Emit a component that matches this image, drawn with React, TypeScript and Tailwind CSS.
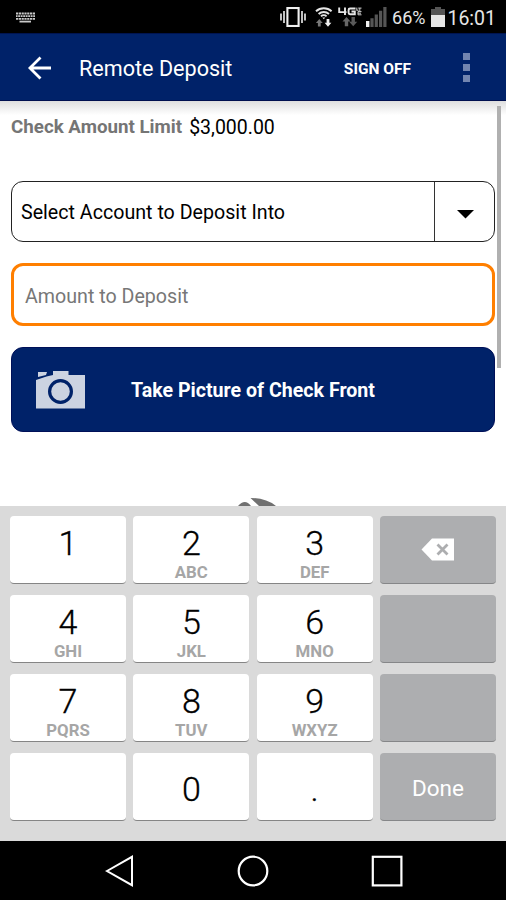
interface PadKey {
  id: string;
  digit?: string;
  letters?: string;
  action?: "delete" | "done" | "none";
}

const KEYS: PadKey[] = [
  { id: "1", digit: "1", letters: "" },
  { id: "2", digit: "2", letters: "ABC" },
  { id: "3", digit: "3", letters: "DEF" },
  { id: "delete", action: "delete" },
  { id: "4", digit: "4", letters: "GHI" },
  { id: "5", digit: "5", letters: "JKL" },
  { id: "6", digit: "6", letters: "MNO" },
  { id: "side1", action: "none" },
  { id: "7", digit: "7", letters: "PQRS" },
  { id: "8", digit: "8", letters: "TUV" },
  { id: "9", digit: "9", letters: "WXYZ" },
  { id: "side2", action: "none" },
  { id: "blank" },
  { id: "0", digit: "0" },
  { id: "dot", digit: "." },
  { id: "done", action: "done" },
];

function StatusBar() {
  return (
    <div className="flex h-[33px] shrink-0 items-center bg-black pt-[1px] pr-[10px] pl-[15px] text-[#e6e6e6]">
      {/* Keyboard notification */}
      <svg width="21" height="11" viewBox="0 0 21 11" className="mr-auto" fill="none" stroke="#c9c9c9">
        <path d="M1 1.5h19" strokeWidth="1.8" strokeDasharray="2.2 .6" />
        <path d="M1 4.2h19" strokeWidth="1.8" strokeDasharray="1.6 .6 2.2 .6" />
        <path d="M1 6.9h19" strokeWidth="1.8" strokeDasharray="2.2 .6" />
        <path d="M4.5 9.6h11.5" strokeWidth="1.8" />
      </svg>
      {/* Vibrate */}
      <svg width="26" height="20" viewBox="0 0 26 20" fill="none" stroke="#f0f0f0" strokeWidth="1.6">
        <rect x="7.4" y="1" width="11.2" height="18" strokeWidth="2.1" />
        <path d="M1 6.5v7M4 4v12M22 4v12M25 6.5v7" />
      </svg>
      {/* Wifi with traffic arrows */}
      <svg width="18" height="20" viewBox="0 0 18 20" className="ml-[9px]">
        <g fill="none" stroke="#e6e6e6" strokeWidth="1.9">
          <path d="M1 4.3a11.5 11.5 0 0 1 15.6 0" />
          <path d="M3.6 7a7.6 7.6 0 0 1 10.4 0" />
          <path d="M6 9.4a4 4 0 0 1 5.6 0" />
        </g>
        <path d="M8.8 12.3l-1.5-1.8h3z" fill="#e6e6e6" />
        <path d="M4.3 12l3.4 4H5.7v3.4H2.9V16H.9z" fill="#777" />
        <path d="M13 19.7l3.4-4h-2v-3.8h-2.8v3.8h-2z" fill="#f0f0f0" />
      </svg>
      {/* 4G LTE */}
      <svg width="24" height="20" viewBox="0 0 24 20" className="ml-[5px]">
        <g fill="none" stroke="#e6e6e6" strokeWidth="1.9">
          <path d="M1.2 .5v4.6h7.3M7 .5v7.6" />
          <path d="M17.5 1.5H12q-1.4 0-1.4 1.4v2.9q0 1.400 1.400 1.400h4.800V4.500H13.500" />
        </g>
        <path d="M18.800 .6v3M18.800 3.200h1.800M20.200 1.100h3.300M21.800 1v3M23.500 4.600h-3.500v3.200h3.500M20 6.200h3" fill="none" stroke="#cfcfcf" strokeWidth="1" />
        <path d="M8.500 10l4 4.500h-2.300v4.700H6.800v-4.700H4.500z" fill="#666" />
        <path d="M15.200 19.200l4-4.500h-2.300V10h-3.400v4.700h-2.300z" fill="#5a5a5a" />
      </svg>
      {/* Signal bars */}
      <svg width="21" height="20" viewBox="0 0 21 20" className="ml-[4px]">
        <path d="M0 14h3.4v6H0z" fill="#f0f0f0" />
        <path d="M4.4 11.2h3.2V20H4.4zM8.7 7.6h3.2V20H8.7zM13 3.8h3.2V20H13zM17.3 0h3.2v20h-3.2z" fill="#555" />
      </svg>
      <span className="ml-[5px] pt-[2px] text-[18px] leading-none">66%</span>
      <svg width="14" height="20" viewBox="0 0 14 20" className="ml-[6px]">
        <path d="M4 0h6v2h4v6H0V2h4z" fill="#555" />
        <path d="M0 8h14v12H0z" fill="#e6e6e6" />
      </svg>
      <span className="ml-[2px] pt-[3px] text-[19.5px] leading-none">16:01</span>
    </div>
  );
}

function Header() {
  return (
    <header className="flex h-[68px] shrink-0 items-center border-t border-b border-t-[#001450] border-b-[#00104f] bg-[#002269] text-white">
      <svg width="24" height="24" viewBox="0 0 24 24" className="mt-[1px] ml-[28px]" fill="none" stroke="#fff" strokeWidth="2.8">
        <path d="M12.5 1.5L1.9 12l10.6 10.5M2 12h21" />
      </svg>
      <h1 className="ml-[27px] flex-1 pt-[4px] text-[21.6px] leading-none">Remote Deposit</h1>
      <button type="button" className="pt-[5px] text-[15.5px] leading-none font-bold">
        SIGN OFF
      </button>
      <div className="mr-[36px] ml-[52px] flex flex-col gap-[4px]">
        <span className="h-[7px] w-[7px] bg-[#7285b0]" />
        <span className="h-[7px] w-[7px] bg-[#7285b0]" />
        <span className="h-[7px] w-[7px] bg-[#7285b0]" />
      </div>
    </header>
  );
}

function DepositForm() {
  return (
    <main className="relative flex h-[405px] shrink-0 flex-col overflow-hidden bg-linear-to-b from-[#dedede] via-white via-[14px] to-white pr-[11px] pl-[11px]">
      <p className="mt-[15px] flex h-[22px] items-center pt-[1px] text-[19.5px] leading-none">
        <span className="text-[18.75px] font-bold text-[#757575]">Check Amount Limit</span>
        <span className="ml-[7px] text-black">$3,000.00</span>
      </p>

      <button type="button" className="mt-[43px] flex h-[61px] items-stretch rounded-[12px] border-[1.5px] border-[#222] bg-white text-left">
        <span className="flex flex-1 items-center pt-[3px] pl-[9px] text-[19.65px] text-black">Select Account to Deposit Into</span>
        <span className="flex w-[60px] items-center justify-center border-l border-[#333] pt-[6px] pl-[1px]">
          <svg width="17" height="9" viewBox="0 0 17 9">
            <path d="M0 0h17L8.5 8.5z" fill="#000" />
          </svg>
        </span>
      </button>

      <div className="mt-[21px] flex h-[63px] items-center rounded-[12px] border-[3px] border-[#ff7f00] bg-white pt-[4px] pl-[11px] text-[19.65px] text-[#777]">
        Amount to Deposit
      </div>

      <button type="button" className="relative mt-[21px] flex h-[85px] items-center justify-center rounded-[12px] border border-[#001058] bg-[#002269] pt-[3px] text-[19.6px] font-bold text-white">
        <svg width="49" height="38" viewBox="0 0 49 38" className="absolute top-[23px] left-[24px]">
          <path d="M0 9l10.500-3.500L17 4V0h15.500v4H49v33.500H0z" fill="#ccd3e1" />
          <path d="M2 1h9L10 4 2 6z" fill="#ccd3e1" />
          <circle cx="24.500" cy="20.500" r="10.900" fill="none" stroke="#002269" strokeWidth="3.200" />
        </svg>
        Take Picture of Check Front
      </button>

      {/* Spinner peeking out above the keyboard */}
      <svg width="40" height="9" viewBox="0 0 40 9" className="mt-[65px] ml-[227px] shrink-0">
        <path d="M0 9Q7 1 13 9zM12.500 1Q28 1 38 9H21z" fill="#707070" />
      </svg>

      <div className="absolute top-[5px] right-[5px] h-[262px] w-[4px] bg-[#b0b0b0]" />
    </main>
  );
}

function Key({ item }: { item: PadKey }) {
  if (item.action) {
    return (
      <button type="button" className="flex items-center justify-center rounded-[4px] border-b border-[#858688] bg-[#adaeb0] text-[22.5px] text-white">
        {item.action === "delete" && (
          <svg width="34" height="23" viewBox="0 0 34 23">
            <path d="M.5 11.500L11 .5h22v22H11z" fill="#fff" />
            <path d="M16.500 6.500l10 10M26.500 6.500l-10 10" stroke="#adaeb0" strokeWidth="2.800" />
          </svg>
        )}
        {item.action === "done" && <span className="pt-[4px]">Done</span>}
      </button>
    );
  }

  return (
    <button type="button" className="flex flex-col items-center rounded-[4px] border-b border-[#858585] bg-white">
      {item.letters !== undefined ? (
        <>
          <span className="mt-[9px] text-[34px] leading-[36px] font-light text-black [-webkit-text-stroke:0.3px_black]">{item.digit}</span>
          <span className="mt-[2px] text-[16.8px] leading-[18px] font-bold text-[#a6a6a6]">{item.letters}</span>
        </>
      ) : (
        <span className="mt-[18px] text-[34px] leading-[36px] font-light text-black [-webkit-text-stroke:0.3px_black]">{item.digit}</span>
      )}
    </button>
  );
}

function NavBar() {
  return (
    <nav className="flex h-[59px] shrink-0 items-center justify-between bg-black pr-[103px] pl-[105px]">
      <svg width="29" height="32" viewBox="0 0 29 32" fill="none" stroke="#fff" strokeWidth="2">
        <path d="M2 16L27 1.800v28.400z" />
      </svg>
      <svg width="32" height="32" viewBox="0 0 32 32" fill="none" stroke="#fff" strokeWidth="2.200">
        <circle cx="16" cy="16" r="14.300" />
      </svg>
      <svg width="32" height="32" viewBox="0 0 32 32" fill="none" stroke="#fff" strokeWidth="2.200">
        <rect x="1.800" y="1.800" width="28.600" height="28.600" />
      </svg>
    </nav>
  );
}

export default function App() {
  return (
    <div className="flex h-[900px] w-[506px] flex-col overflow-hidden bg-white font-['Roboto',sans-serif]">
      <StatusBar />
      <Header />
      <DepositForm />
      <div className="grid h-[335px] shrink-0 grid-cols-4 grid-rows-4 gap-x-[7.3px] gap-y-[11px] bg-[#dadada] px-[10px] pt-[10px] pb-[20px]">
        {KEYS.map((item) => (
          <Key key={item.id} item={item} />
        ))}
      </div>
      <NavBar />
    </div>
  );
}
